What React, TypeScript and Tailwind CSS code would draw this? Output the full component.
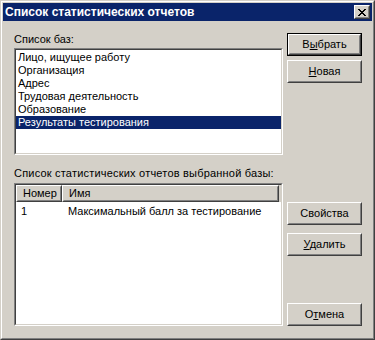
import React from "react";

// Windows 2000 style colours
// face #d4d0c8, shadow #808080, dark shadow #404040, title/selection #0a246a

const bases = [
  "Лицо, ищущее работу",
  "Организация",
  "Адрес",
  "Трудовая деятельность",
  "Образование",
  "Результаты тестирования",
];

// raised push button (75x23)
function Button({
  children,
  isDefault,
  className = "",
}: {
  children: React.ReactNode;
  isDefault?: boolean;
  className?: string;
}) {
  const face = (
    <div className="h-full border border-t-white border-l-white border-r-[#404040] border-b-[#404040]">
      <div className="h-full flex items-center justify-center border border-t-[#d4d0c8] border-l-[#d4d0c8] border-r-[#808080] border-b-[#808080]">
        {children}
      </div>
    </div>
  );
  return (
    <div className={`w-[75px] h-[23px] ${className}`}>
      {isDefault ? <div className="h-full border border-black">{face}</div> : face}
    </div>
  );
}

// sunken box for list controls
function Sunken({ children, className = "" }: { children: React.ReactNode; className?: string }) {
  return (
    <div className={`border border-t-[#808080] border-l-[#808080] border-r-white border-b-white ${className}`}>
      <div className="h-full bg-white border border-t-[#404040] border-l-[#404040] border-r-[#d4d0c8] border-b-[#d4d0c8] overflow-hidden">
        {children}
      </div>
    </div>
  );
}

function HeaderCell({ children, className = "" }: { children: React.ReactNode; className?: string }) {
  return (
    <div className={`h-full border border-t-white border-l-white border-r-[#404040] border-b-[#404040] ${className}`}>
      <div className="h-full flex items-center pl-[5px] border border-t-[#d4d0c8] border-l-[#d4d0c8] border-r-[#808080] border-b-[#808080]">
        {children}
      </div>
    </div>
  );
}

export default function App() {
  return (
    <div className="w-[375px] h-[340px] border border-t-[#d4d0c8] border-l-[#d4d0c8] border-r-[#404040] border-b-[#404040] font-['Liberation_Sans',Arial,sans-serif] text-[11px] leading-[13px] text-black select-none">
      <div className="h-full flex flex-col p-px bg-[#d4d0c8] border border-t-white border-l-white border-r-[#808080] border-b-[#808080]">
        {/* title bar */}
        <div className="h-[18px] flex items-center justify-between bg-[#0a246a] pl-[2px] pr-[2px]">
          <span className="text-white font-bold text-[12px] leading-[14px]">Список статистических отчетов</span>
          <div className="w-[16px] h-[14px] border border-t-white border-l-white border-r-[#404040] border-b-[#404040]">
            <div className="h-full flex items-center justify-center bg-[#d4d0c8] border border-t-[#d4d0c8] border-l-[#d4d0c8] border-r-[#808080] border-b-[#808080]">
              <svg width="8" height="7" viewBox="0 0 8 7" shapeRendering="crispEdges">
                <path
                  fill="black"
                  d="M0 0h2v1h-2zM6 0h2v1h-2zM1 1h2v1h-2zM5 1h2v1h-2zM2 2h4v1h-4zM3 3h2v1h-2zM2 4h4v1h-4zM1 5h2v1h-2zM5 5h2v1h-2zM0 6h2v1h-2zM6 6h2v1h-2z"
                />
              </svg>
            </div>
          </div>
        </div>

        {/* body */}
        <div className="flex-1 flex">
          <div className="w-[269px] ml-[11px] flex flex-col">
            <div className="mt-[12px] h-[13px]">Список баз:</div>
            <Sunken className="mt-[2px] h-[107px]">
              <ul className="pt-px">
                {bases.map((b, i) => (
                  <li
                    key={b}
                    className={`h-[13px] pl-[2px] whitespace-nowrap ${
                      i === bases.length - 1 ? "bg-[#0a246a] text-white" : ""
                    }`}
                  >
                    {b}
                  </li>
                ))}
              </ul>
            </Sunken>

            <div className="mt-[12px] h-[13px] whitespace-nowrap tracking-[0.2px]">
              Список статистических отчетов выбранной базы:
            </div>
            <Sunken className="mt-[3px] h-[143px]">
              <div className="h-[17px] flex bg-[#d4d0c8]">
                <HeaderCell className="w-[46px]">Номер</HeaderCell>
                <HeaderCell className="w-[217px]">Имя</HeaderCell>
              </div>
              <div className="mt-[3px] h-[13px] flex whitespace-nowrap">
                <div className="w-[46px] pl-[5px]">1</div>
                <div className="pl-[6px]">Максимальный балл за тестирование</div>
              </div>
            </Sunken>
          </div>

          <div className="ml-[4px] flex flex-col">
            <Button isDefault className="mt-[12px]">
              <span>
                В<u className="underline-offset-[1px]">ы</u>брать
              </span>
            </Button>
            <Button className="mt-[4px]">
              <span>
                <u className="underline-offset-[1px]">Н</u>овая
              </span>
            </Button>
            <Button className="mt-[119px]">Свойства</Button>
            <Button className="mt-[8px]">
              <span>
                <u className="underline-offset-[1px]">У</u>далить
              </span>
            </Button>
            <Button className="mt-[47px]">
              <span>
                О<u className="underline-offset-[1px]">т</u>мена
              </span>
            </Button>
          </div>
        </div>
      </div>
    </div>
  );
}
